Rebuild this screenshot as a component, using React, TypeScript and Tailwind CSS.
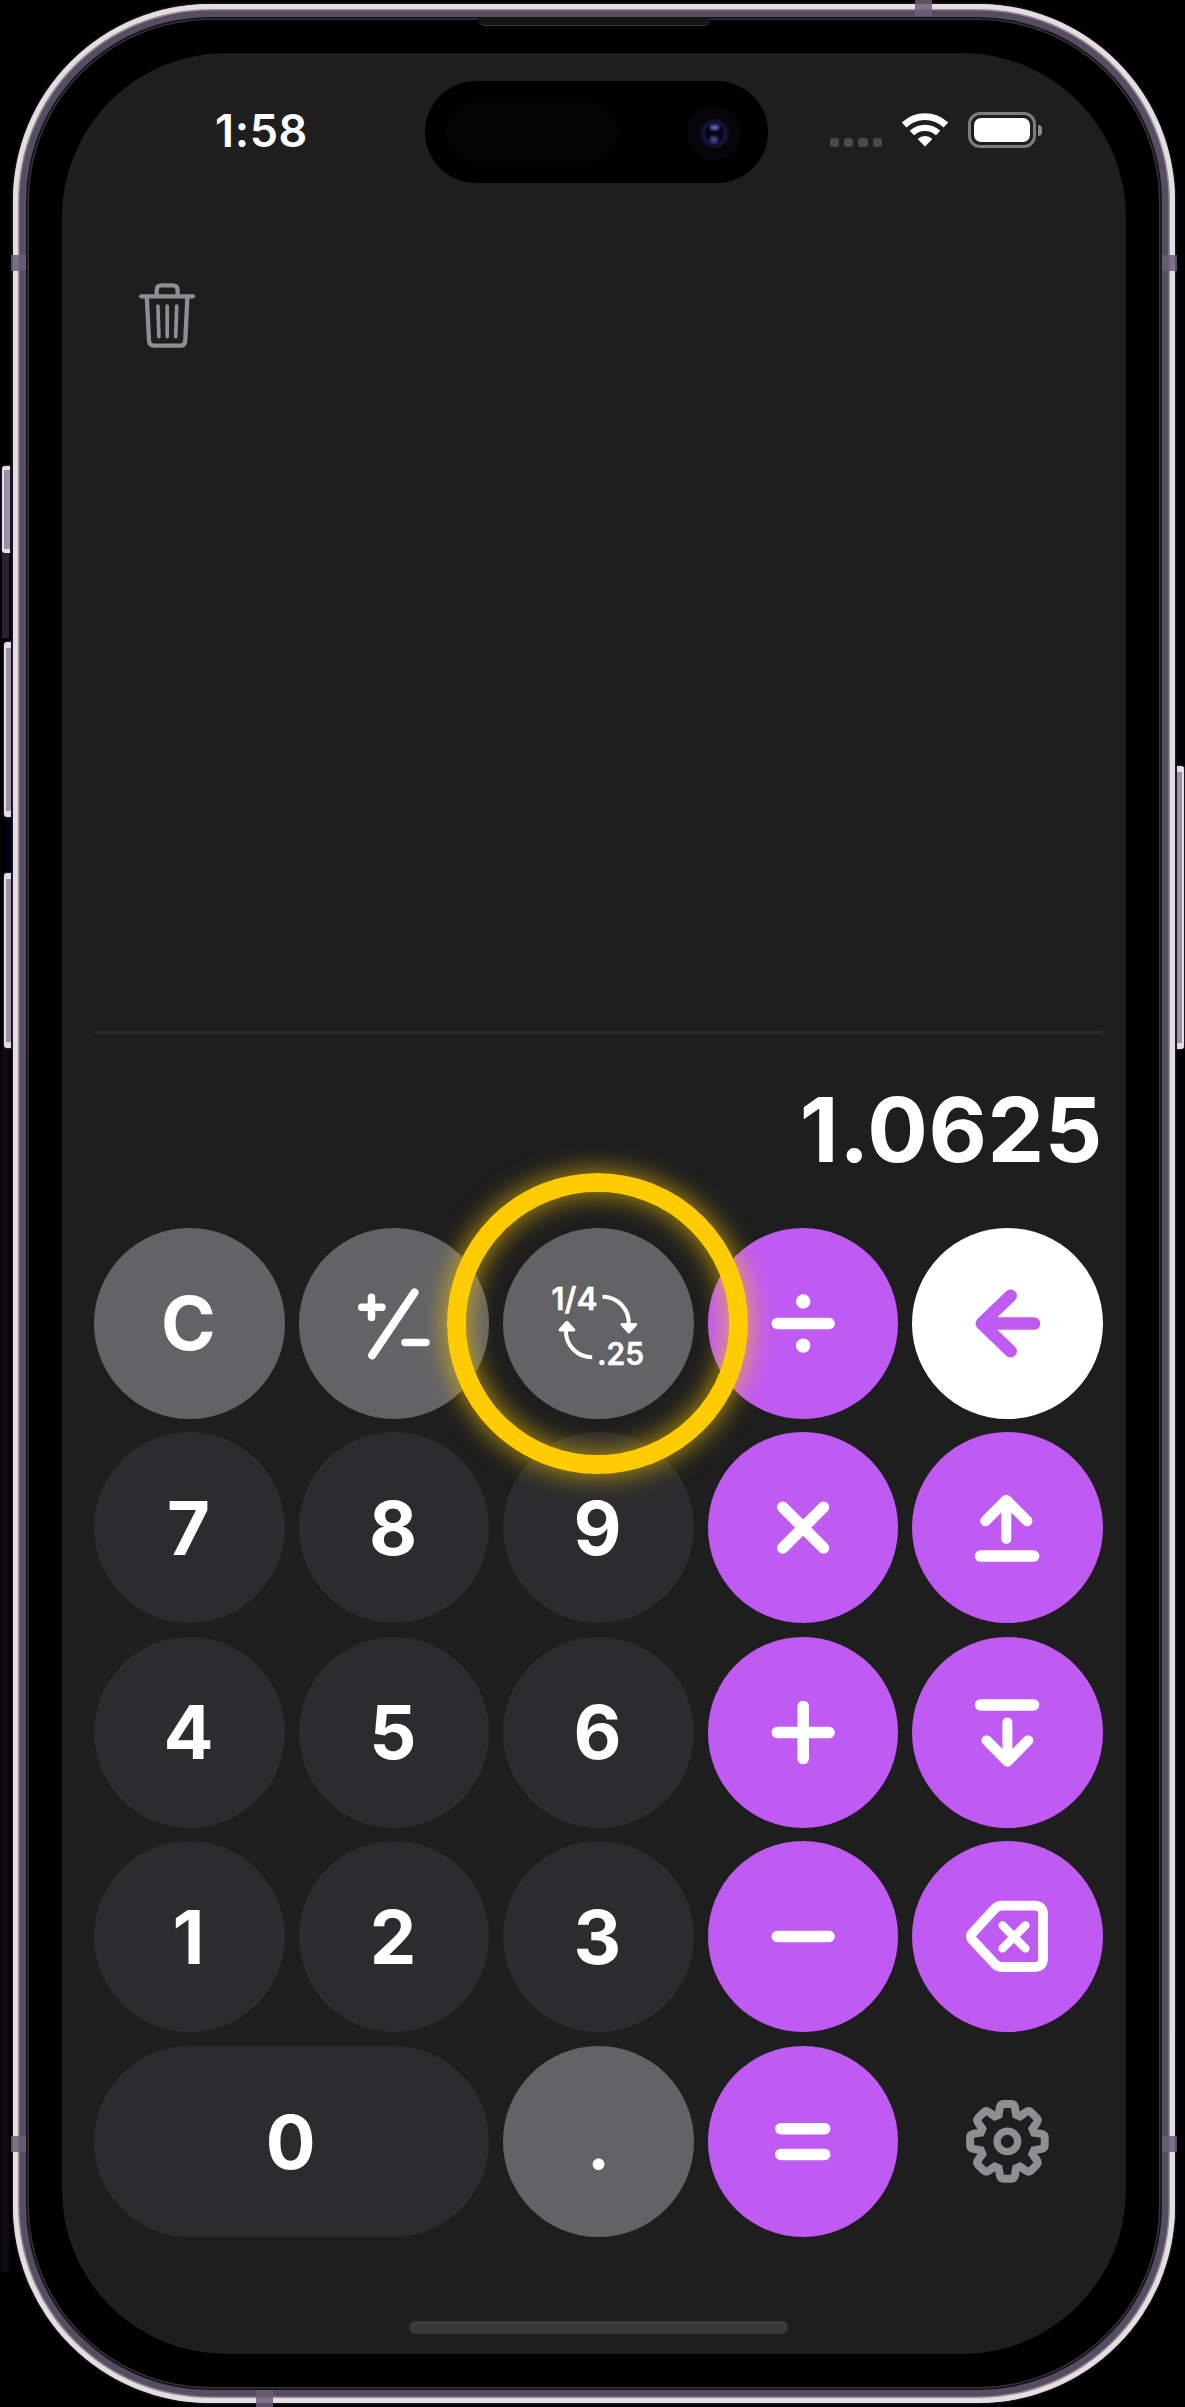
import type { ReactNode } from 'react';

type Tone = 'gray' | 'dark' | 'purple' | 'white' | 'plain';

const tones: Record<Tone, string> = {
  gray: 'bg-[#636366] text-white',
  dark: 'bg-[#2c2c2e] text-white',
  purple: 'bg-[#bf5af2] text-white',
  white: 'bg-white text-[#bf5af2]',
  plain: 'text-[#8e8e93]',
};

function Key({ tone, wide, label, children }: { tone: Tone; wide?: boolean; label?: string; children: ReactNode }) {
  const isText = typeof children === 'string';
  return (
    <button
      aria-label={label}
      className={`flex h-[191px] w-full items-center justify-center rounded-full text-[74px] leading-none font-bold ${isText ? 'pr-[2px]' : ''} ${wide ? 'col-span-2' : ''} ${tones[tone]}`}
    >
      {children}
    </button>
  );
}

function Glyph({ w = 11.5, join = 'round', children }: { w?: number; join?: 'round' | 'miter'; children: ReactNode }) {
  return (
    <svg
      viewBox="0 0 191 191"
      className="h-[191px] w-[191px] shrink-0"
      fill="none"
      stroke="currentColor"
      strokeWidth={w}
      strokeLinecap="round"
      strokeLinejoin={join}
    >
      {children}
    </svg>
  );
}

function gearPath() {
  const c = 95.4;
  const at = (x: number, y: number, turn: number) => {
    const a = (turn * Math.PI) / 180;
    const px = c + x * Math.cos(a) - y * Math.sin(a);
    const py = c + x * Math.sin(a) + y * Math.cos(a);
    return `${px.toFixed(2)} ${py.toFixed(2)}`;
  };
  let d = '';
  for (let i = 0; i < 8; i++) {
    const t = i * 45;
    d += `${i ? 'L' : 'M'}${at(-8.8, -26.6, t)}L${at(-7.5, -34, t)}Q${at(-6.9, -37.3, t)} ${at(-3.8, -37.3, t)}`;
    d += `L${at(3.8, -37.3, t)}Q${at(6.9, -37.3, t)} ${at(7.5, -34, t)}L${at(8.8, -26.6, t)}`;
  }
  return d + 'Z';
}

function ConvertIcon() {
  return (
    <svg viewBox="0 0 191 191" className="h-[191px] w-[191px] shrink-0" fill="none" stroke="white" strokeWidth="4">
      <path d="M99.5 68.7A26.3 26.3 0 0 1 125.8 96" />
      <path d="M89.2 129.3A26.3 26.3 0 0 1 62.9 102" />
      <path d="M119 96.6H132.8L125.9 104Z" fill="white" strokeWidth="3" strokeLinejoin="round" />
      <path d="M57 102H70.8L63.9 94.3Z" fill="white" strokeWidth="3" strokeLinejoin="round" />
      <text x="48.2" y="81.6" fill="white" stroke="white" strokeWidth="0.4" fontSize="31.5" fontWeight="600" textLength="46.5" lengthAdjust="spacingAndGlyphs">
        1/4
      </text>
      <text x="94" y="136.6" fill="white" stroke="white" strokeWidth="0.4" fontSize="31.5" fontWeight="600" textLength="47.2" lengthAdjust="spacingAndGlyphs">
        .25
      </text>
    </svg>
  );
}

function TrashIcon() {
  return (
    <svg viewBox="0 0 58 68" className="h-[68px] w-[58px]" fill="none" stroke="#8e8e93" strokeWidth="4.3" strokeLinecap="round" strokeLinejoin="round">
      <path d="M3.2 15.3H55" />
      <path d="M8.8 16L11 59.5Q11.3 64.6 16 64.6H42.3Q47 64.6 47.3 59.5L49.4 16" />
      <path d="M18.7 14V9Q18.7 4.3 23.5 4.3H34.7Q39.6 4.3 39.6 9V14" />
      <path d="M19.9 25L20.9 55.6M29.2 25V55.6M38.7 25L37.7 55.6" strokeWidth="3.7" />
    </svg>
  );
}

function StatusBar() {
  return (
    <div className="flex h-[102px] items-center">
      <div className="flex h-[102px] w-[363px] items-center justify-end pb-[4px]">
        <span className="mr-[117px] text-[45px] leading-none font-semibold tracking-[0.6px] whitespace-nowrap text-white">1:58</span>
      </div>
      <div className="flex h-[102px] w-[343px] items-center justify-between rounded-full bg-black pr-[27px] pl-[20px]">
        <div className="h-[60px] w-[175px] rounded-full bg-[#040404]" />
        <div className="mt-[2px] flex h-[54px] w-[54px] items-center justify-center rounded-full bg-[#08040b]">
          <div className="flex h-[29px] w-[29px] items-center justify-center rounded-full bg-[#101226]">
            <div className="flex h-[23px] w-[23px] flex-col items-center justify-between rounded-full border-2 border-[#11154c] bg-[#060616] pt-px">
              <div className="h-[5px] w-[9px] rounded-full bg-[#5560b8] blur-[1px]" />
              <div className="h-[7px] w-[8px] rounded-full bg-linear-to-b from-[#0c4a5a] to-[#6a2fa8] blur-[1px]" />
            </div>
          </div>
        </div>
      </div>
      <div className="flex h-[38px] flex-1 items-start pl-[61.5px]">
        <div className="flex gap-[5.2px] pt-[25px]">
          {[0, 1, 2, 3].map((i) => (
            <span key={i} className="h-[9.3px] w-[9.3px] rounded-[3px] bg-[#4a4a4c]" />
          ))}
        </div>
        <svg viewBox="0 0 46 34" className="ml-[19.5px] h-[34px] w-[46px]" fill="none" stroke="white">
          <path d="M2.1 12A30.1 30.1 0 0 1 43.9 12" strokeWidth="6.7" />
          <path d="M9.9 20.1A18.8 18.8 0 0 1 36.1 20.1" strokeWidth="6.3" />
          <path d="M15.6 25.9A10.7 10.7 0 0 1 30.4 25.9L23 33.6Z" fill="white" stroke="none" />
        </svg>
        <div className="-mt-px ml-[20px] flex items-center gap-[2px]">
          <div className="h-[36px] w-[68px] rounded-[12px] border-[3px] border-[#7d7d7d] p-[3px]">
            <div className="h-full w-full rounded-[7px] bg-white" />
          </div>
          <div className="h-[11px] w-[4px] rounded-r-full bg-[#8a8a8a]" />
        </div>
      </div>
    </div>
  );
}

const sideKey = 'absolute border-[#e3dee3] bg-[#9a91a6] shadow-[0_0_2px_1px_#2d2233]';
const band = 'absolute bg-[#6b5e76]/85';

function PhoneHardware() {
  return (
    <>
      <div className="absolute top-[553px] left-[2px] h-[85px] w-[7px] bg-[#2d2235]" />
      <div className="absolute top-[818px] left-[5px] h-[52px] w-[5px] bg-[#00001c]" />
      <div className="absolute top-[1048px] left-[1px] h-[1224px] w-[8px] bg-[#0d0a10]" />
      <div className={`${sideKey} top-[466px] left-[2px] h-[87px] w-[8px] rounded-l-[3px] border-y-4 border-l-2`} />
      <div className={`${sideKey} top-[642px] left-[4px] h-[175px] w-[6.5px] rounded-l-[3px] border-y-6 border-l-2`} />
      <div className={`${sideKey} top-[873px] left-[4px] h-[175px] w-[6.5px] rounded-l-[3px] border-y-6 border-l-2`} />
      <div className={`${sideKey} top-[766px] left-[1177px] h-[283px] w-[6.5px] rounded-r-[3px] border-y-6 border-r-2`} />
    </>
  );
}

function AntennaBands() {
  return (
    <>
      <div className={`${band} top-[255px] left-[11px] h-[16px] w-[15px]`} />
      <div className={`${band} top-[255px] left-[1162px] h-[16px] w-[15px]`} />
      <div className={`${band} top-[2136px] left-[11px] h-[16px] w-[15px]`} />
      <div className={`${band} top-[2136px] left-[1162px] h-[16px] w-[15px]`} />
      <div className={`${band} top-0 left-[915px] h-[16px] w-[17px]`} />
      <div className={`${band} top-[2390px] left-[256px] h-[17px] w-[17px]`} />
      <div className="absolute top-[18px] left-[478px] h-[8px] w-[232px] rounded-b-[7px] border-b border-[#383838] bg-[#151515]" />
    </>
  );
}

export default function App() {
  return (
    <div className="relative h-[2407px] w-[1185px] overflow-hidden bg-black pt-[4px] pl-[13px] font-['Inter',sans-serif]">
      <PhoneHardware />
      <div className="relative h-[2399px] w-[1162px] rounded-[197px] bg-black px-[49px] pt-[49px] shadow-[0_0_2px_1px_#2a1b36,inset_0_0_0_5px_#e3dfe1,inset_0_0_0_6.5px_#9c8b93,inset_0_0_0_13px_#574d62,inset_0_0_0_14.5px_#15111a,inset_0_0_0_16px_#333333]">
        <div className="flex h-[2301px] w-[1064px] flex-col rounded-[164px] bg-[#1e1e1e] pt-[28px]">
          <StatusBar />
          <div className="mr-[23px] ml-[32px] flex h-[851px] items-start border-b-[3px] border-[#2c2c2e] pt-[98px] pl-[44px]">
            <TrashIcon />
          </div>
          <div className="mr-[23px] ml-[32px] flex h-[193.7px] items-center justify-end pb-[2px]">
            <span className="text-[90px] leading-none font-bold tracking-[0.6px] whitespace-nowrap text-white">1.0625</span>
          </div>
          <div className="mr-[23px] ml-[32px] grid grid-cols-5 gap-[13.6px]">
            <Key tone="gray">C</Key>
            <Key tone="gray" label="Toggle sign">
              <Glyph w={7.5}>
                <path d="M116.5 64.5L74.2 127.3" strokeWidth="8.2" />
                <path d="M63.7 79.3H84M73.5 69.3V89.6M107 114.6H128" />
              </Glyph>
            </Key>
            <div className="relative">
              <Key tone="gray" label="Convert fraction to decimal">
                <ConvertIcon />
              </Key>
              <div className="absolute top-[-55px] left-[-56px] z-10 h-[301px] w-[301px] rounded-full border-[19px] border-[#ffcc02] shadow-[0_0_24px_3px_#ffcc0299,inset_0_0_24px_3px_#ffcc0299]" />
            </div>
            <Key tone="purple" label="Divide">
              <Glyph>
                <path d="M69.3 95.5H121.1" />
                <circle cx="95.2" cy="73.5" r="7.2" fill="currentColor" stroke="none" />
                <circle cx="95.2" cy="117.6" r="7.2" fill="currentColor" stroke="none" />
              </Glyph>
            </Key>
            <Key tone="white" label="Back">
              <Glyph w={12.6}>
                <path d="M98.6 67.8L69.8 95.5L98.6 123.2M73 95.5H122" />
              </Glyph>
            </Key>

            <Key tone="dark">7</Key>
            <Key tone="dark">8</Key>
            <Key tone="dark">9</Key>
            <Key tone="purple" label="Multiply">
              <Glyph>
                <path d="M74.8 75.2L115.5 116M115.5 75.2L74.8 116" />
              </Glyph>
            </Key>
            <Key tone="purple" label="Store">
              <Glyph w={11}>
                <path d="M73.4 89L94.3 68L115.2 89" strokeWidth="10.5" />
                <path d="M94.3 70V107" strokeWidth="10" />
                <path d="M68.6 124.1H121.6" strokeWidth="11.5" />
              </Glyph>
            </Key>

            <Key tone="dark">4</Key>
            <Key tone="dark">5</Key>
            <Key tone="dark">6</Key>
            <Key tone="purple" label="Add">
              <Glyph>
                <path d="M69.3 95.5H121.1M95.2 69.4V121.6" />
              </Glyph>
            </Key>
            <Key tone="purple" label="Recall">
              <Glyph w={11}>
                <path d="M74.7 103.4L95.4 124.4L116.1 103.4" strokeWidth="10.5" />
                <path d="M95.4 85.5V122" strokeWidth="10" />
                <path d="M68.6 67.9H121.6" strokeWidth="11.5" />
              </Glyph>
            </Key>

            <Key tone="dark">1</Key>
            <Key tone="dark">2</Key>
            <Key tone="dark">3</Key>
            <Key tone="purple" label="Subtract">
              <Glyph>
                <path d="M69.3 95.5H121.1" />
              </Glyph>
            </Key>
            <Key tone="purple" label="Delete">
              <Glyph w={9.8}>
                <path d="M131 73.5V117.5Q131 126 122.5 126H90Q86 126 83 123L60.5 99Q57.5 95.5 60.5 92L83 67.5Q86 64.6 90 64.6H122.5Q131 64.6 131 73.5Z" />
                <path d="M90.6 84.4L113.4 107.4M113.4 84.4L90.6 107.4" strokeWidth="8.4" />
              </Glyph>
            </Key>

            <Key tone="dark" wide>0</Key>
            <Key tone="gray">
              <span className="font-semibold">.</span>
            </Key>
            <Key tone="purple" label="Equals">
              <Glyph>
                <path d="M72.8 82.7H116.7M72.8 108.4H116.7" />
              </Glyph>
            </Key>
            <Key tone="plain" label="Settings">
              <Glyph w={8} join="miter">
                <path d={gearPath()} />
                <circle cx="95.4" cy="95.4" r="10.3" strokeWidth="7.3" />
              </Glyph>
            </Key>
          </div>
          <div className="mt-[84px] ml-[347px] h-[13px] w-[379px] rounded-full bg-linear-to-b from-[#3d3d3d] to-[#363636]" />
        </div>
      </div>
      <AntennaBands />
    </div>
  );
}
